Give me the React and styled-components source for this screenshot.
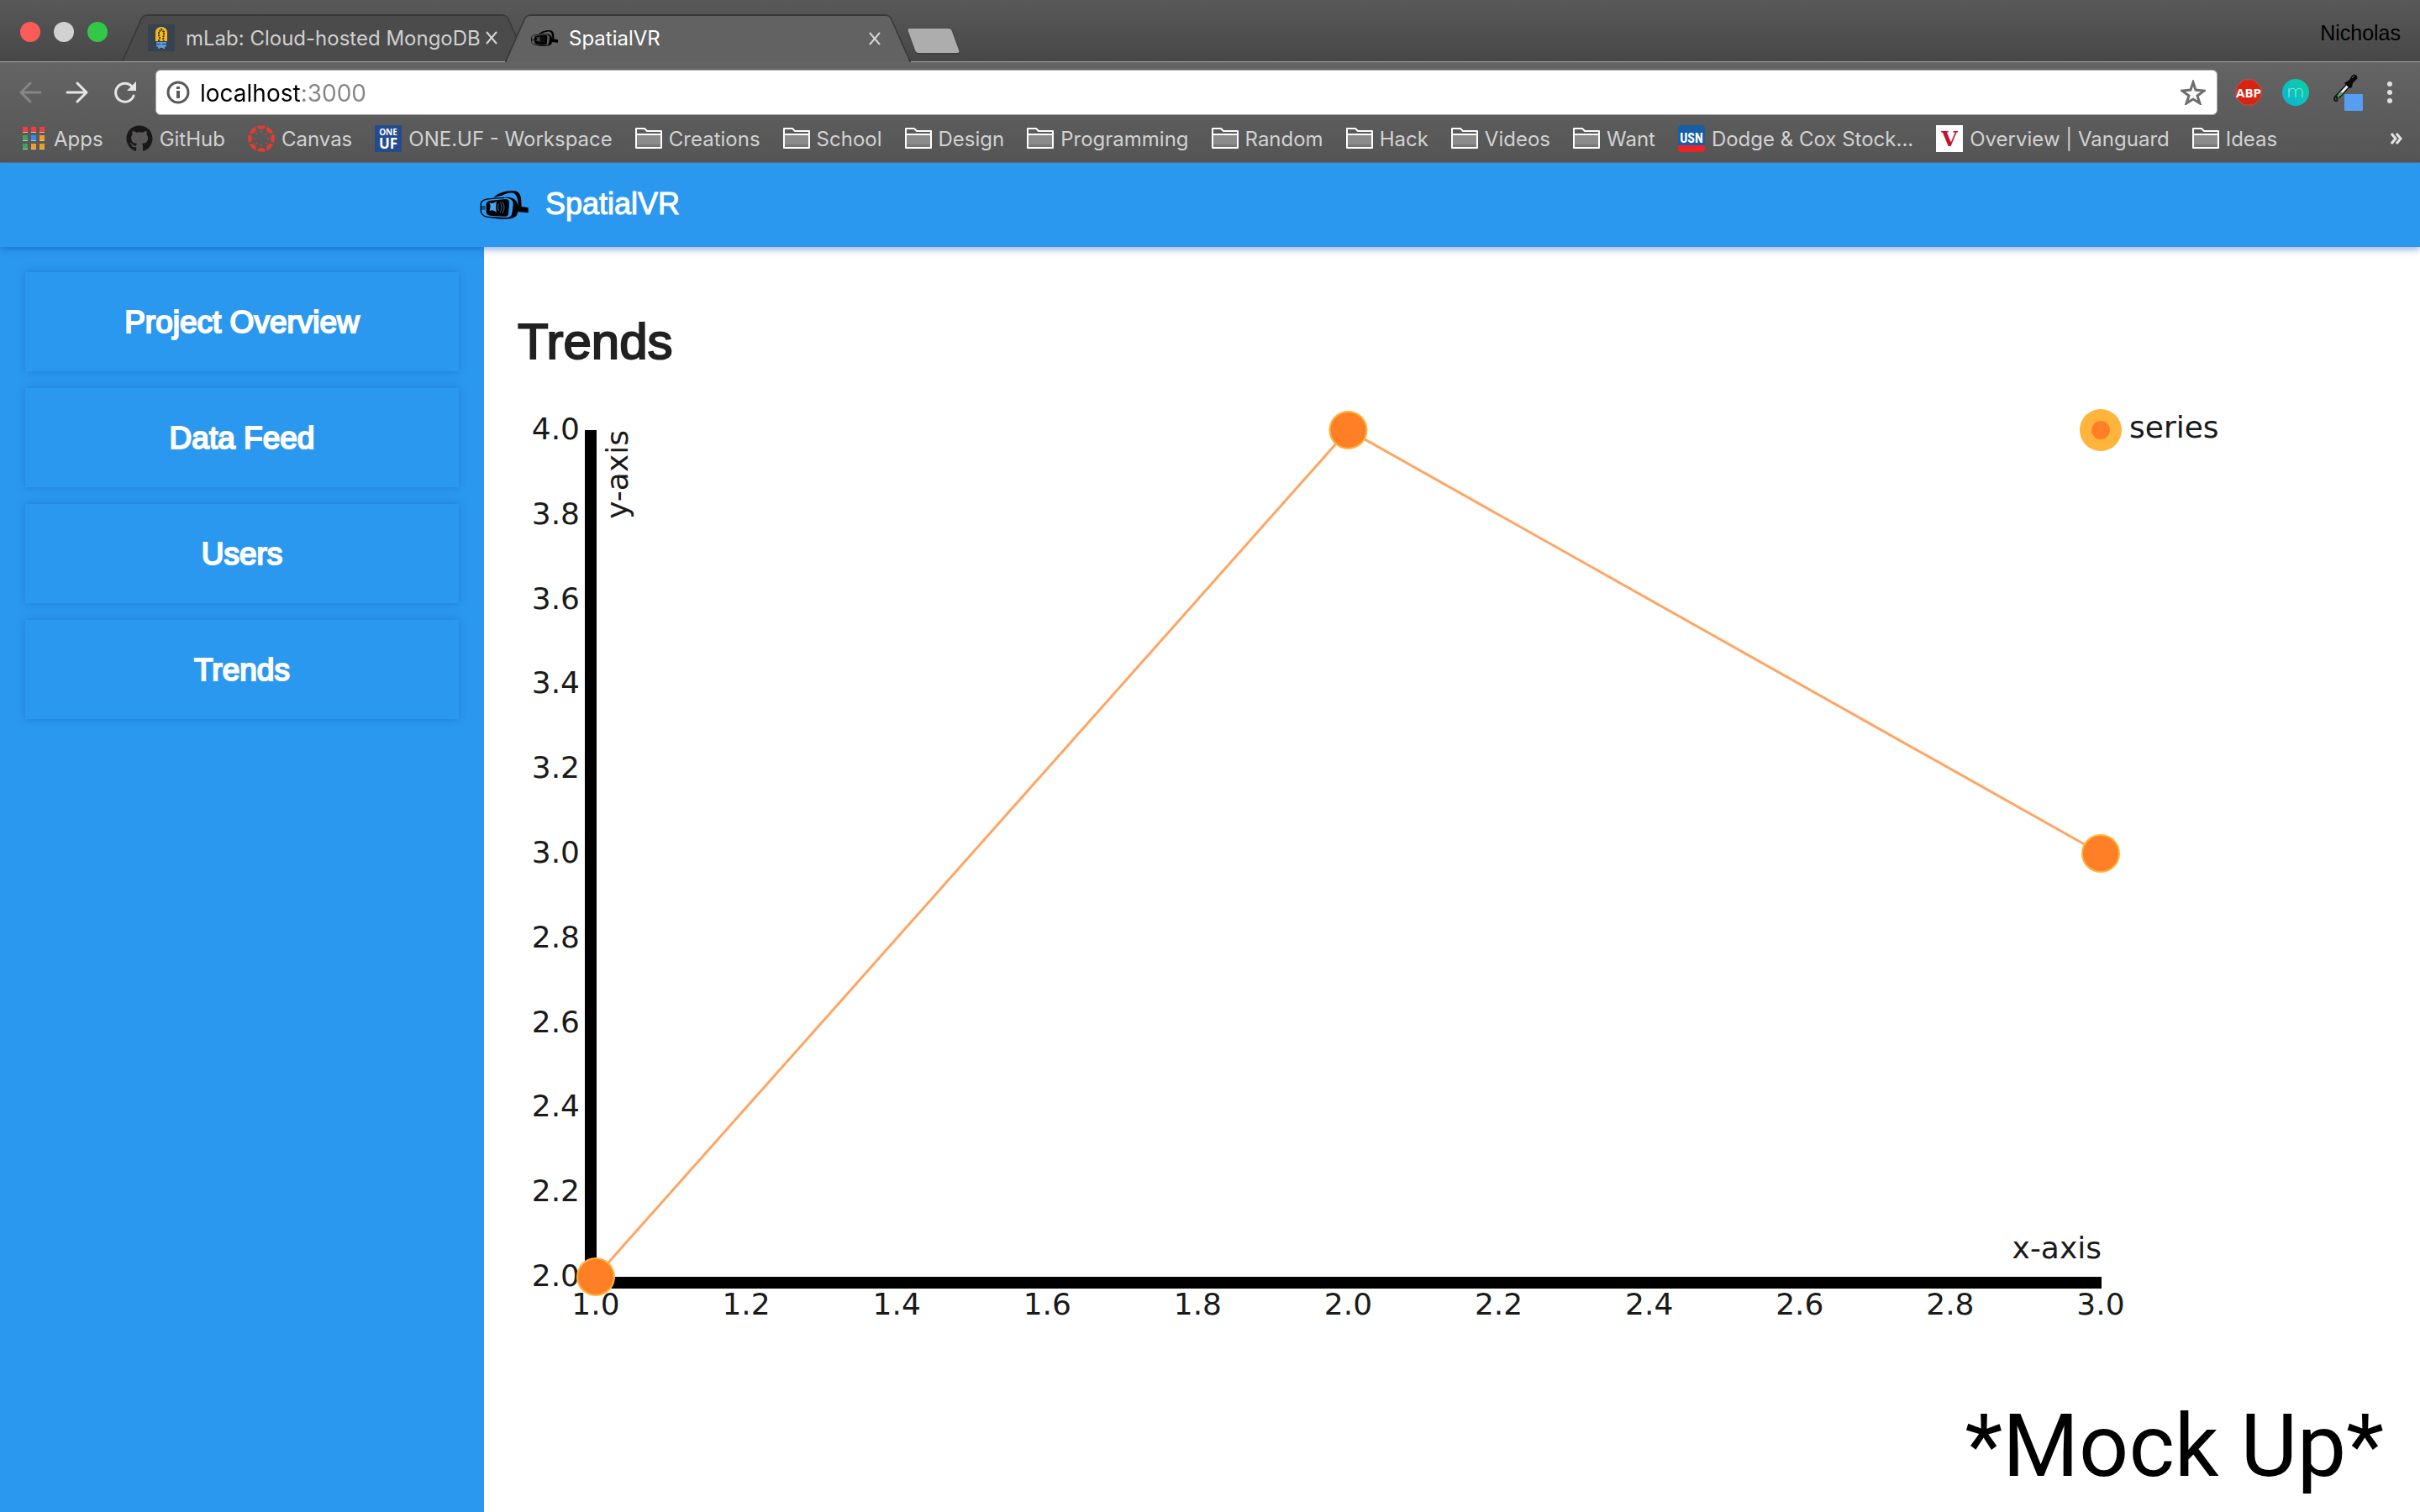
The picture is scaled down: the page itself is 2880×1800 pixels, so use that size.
import styled, { createGlobalStyle, css } from "styled-components";
import { FaGithub } from "react-icons/fa";

const GlobalStyle = createGlobalStyle`
  * {
    box-sizing: border-box;
  }
  body {
    margin: 0;
    background: #fff;
    font-family: "Liberation Sans", Arial, sans-serif;
  }
  button {
    padding: 0;
    border: 0;
    background: none;
    font: inherit;
    color: inherit;
  }
  a {
    color: inherit;
    text-decoration: none;
  }
  svg {
    display: block;
    flex: none;
  }
`;

const blue = "#2b98f0";

const Page = styled.div`
  display: flex;
  flex-direction: column;
  min-height: 100vh;
`;

/* browser window */

const Browser = styled.header`
  font-family: Inter, Roboto, sans-serif;
`;

const TabStrip = styled.div`
  display: flex;
  align-items: flex-end;
  height: 74px;
  padding: 0 23px 0 24px;
  background: linear-gradient(#595959, #474747);
  border-bottom: 1px solid #a2a2a2;
`;

const Lights = styled.div`
  display: flex;
  gap: 16px;
  align-self: center;
  margin: 2px 17px 0 0;
`;

const Light = styled.button`
  width: 24px;
  height: 24px;
  border-radius: 50%;
  background: ${(p) => p.$color};
`;

const tabSide = css`
  content: "";
  position: absolute;
  z-index: -1;
  top: 0;
  bottom: 0;
  width: 60%;
  border-top: 2px solid #383838;
  background: ${(p) => (p.$active ? "#626262" : "#4b4b4b")};
`;

const Tab = styled.div`
  position: relative;
  z-index: ${(p) => (p.$active ? 2 : 1)};
  display: flex;
  align-items: center;
  width: 483px;
  height: ${(p) => (p.$active ? 57 : 56)}px;
  margin: 0 -27px ${(p) => (p.$active ? -1 : 0)}px 0;
  padding: 0 35px 0 31px;
  font-size: 24px;
  color: ${(p) => (p.$active ? "#fff" : "#d0d0d0")};
  &::before {
    ${tabSide}
    left: 12px;
    border-left: 2px solid #383838;
    border-top-left-radius: 6px;
    transform: skewX(-24deg);
  }
  &::after {
    ${tabSide}
    right: 12px;
    border-right: 2px solid #383838;
    border-top-right-radius: 6px;
    transform: skewX(24deg);
  }
`;

const TabTitle = styled.span`
  flex: 1;
  margin-left: 13px;
  overflow: hidden;
  white-space: nowrap;
`;

const TabClose = styled.button`
  color: #d6d6d6;
`;

const NewTab = styled.button`
  width: 52px;
  height: 29px;
  margin: 0 0 10px 28px;
  border-radius: 3px;
  background: #adadad;
  box-shadow: 0 1px 2px #3a3a3a;
  transform: skewX(20deg);
`;

const Profile = styled.button`
  margin: 0 0 19px auto;
  font-family: "Liberation Sans", Arial, sans-serif;
  font-size: 25px;
  color: #000;
`;

const Bars = styled.div`
  background: linear-gradient(#646464, #555);
  border-bottom: 1px solid #6a6a6a;
`;

const Toolbar = styled.div`
  display: flex;
  align-items: center;
  padding: 9px 32px 0 22px;
`;

const NavButtons = styled.nav`
  display: flex;
  gap: 28px;
  margin-right: 23px;
`;

const AddressBar = styled.form`
  flex: 1;
  display: flex;
  align-items: center;
  height: 54px;
  padding: 0 13px 0 12px;
  background: #fff;
  border: 1px solid #a9a9a9;
  border-radius: 6px;
`;

/* host is black, port is grey */
const Address = styled.input`
  flex: 1;
  margin-left: 12px;
  padding: 1px 0 0;
  border: 0;
  outline: 0;
  font: 28px Inter, Roboto, sans-serif;
  background: linear-gradient(to right, #000 122px, #858585 122px);
  background-clip: text;
  color: transparent;
`;

const Extensions = styled.div`
  display: flex;
  align-items: center;
  gap: 24px;
  margin-left: 21px;
`;

const BookmarkBar = styled.nav`
  display: flex;
  align-items: center;
  gap: 27px;
  height: 56px;
  padding: 0 21px 0 24px;
  font-size: 24px;
  color: #d2d2d2;
  white-space: nowrap;
`;

const Bookmark = styled.a`
  display: flex;
  align-items: center;
  gap: 8px;
`;

const More = styled.button`
  margin-left: auto;
  color: #e4e4e4;
`;

/* application */

const AppHeader = styled.header`
  position: relative;
  z-index: 1;
  display: flex;
  height: 100px;
  padding-left: calc(20% - 5px);
  background: ${blue};
  box-shadow: 0 3px 8px rgba(20, 80, 180, 0.45);
`;

const Brand = styled.a`
  display: flex;
  gap: 20px;
  font-size: 36px;
  line-height: 97px;
  color: #fff;
  -webkit-text-stroke: 1px #fff;
  svg {
    align-self: center;
  }
`;

const Body = styled.div`
  flex: 1;
  display: flex;
`;

const Sidebar = styled.nav`
  display: flex;
  flex-direction: column;
  gap: 20px;
  width: 20%;
  padding: 30px;
  background: ${blue};
`;

const SideLink = styled.button`
  height: 118px;
  padding-top: 2px;
  background: ${blue};
  box-shadow: 0 0 10px rgba(0, 40, 110, 0.25);
  font-size: 37px;
  color: #fff;
  -webkit-text-stroke: 2px #fff;
`;

const Main = styled.main`
  flex: 1;
  display: flex;
  flex-direction: column;
  padding: 80px 40px 18px;
`;

const Heading = styled.h1`
  margin: 0 0 20px;
  font-size: 60px;
  font-weight: 400;
  line-height: 66px;
  color: #212121;
  -webkit-text-stroke: 2px #212121;
`;

const ChartSvg = styled.svg`
  width: 100%;
  font-family: "DejaVu Sans", sans-serif;
  font-size: 36px;
  fill: #1a1a1a;
`;

const MockUp = styled.p`
  margin: auto 3px 0 0;
  font-family: Roboto, sans-serif;
  font-size: 104px;
  line-height: 120px;
  text-align: right;
  color: #000;
`;

const Headset = ({ width, height, lens }) => (
  <svg width={width} height={height} viewBox="0 0 172 102" fill="#000" stroke="none">
    <path d="M48 25C62 9 90 0 116 0c18 0 27 10 30 26l2 30-12 2c0-24-3-43-16-49-10-4-30 1-42 8z" />
    <path
      d="M3 66V45c2-10 14-15 34-16l50-4M3 66c-2 14 6 26 24 28l56 5"
      fill="none"
      stroke="#000"
      strokeWidth="4"
    />
    <path d="M2 54h17v14H2z" opacity=".5" />
    <path d="M22 50c0-10 5-13 18-15l50-5c10 0 14 5 14 15l-3 38c-2 8-6 9-15 9l-50-3c-10-1-14-6-14-16z" />
    <path d="M84 24c22-4 42 3 48 18 6 12 5 34-2 47-8 10-29 13-51 12-18 0-34-3-44-7l54 2c20 0 24-6 26-20l3-28c1-14-8-20-34-24z" />
    <path d="M126 53l46 8v18l-42-4z" />
    <path d="M98 28c13 5 17 11 16 27s-4 29-14 37" fill="none" stroke={lens} strokeWidth="2" />
    <path d="M33 42c8 5 17 4 26-5-3 14-3 28 0 42-8-9-17-11-26-7 5-11 5-20 0-30z" fill={lens} />
    <path
      d="M66 46c-3 8-3 18 0 26M71 40c8 10 8 28 0 38M79 39c9 12 9 30 0 42"
      fill="none"
      stroke={lens}
      strokeWidth="2"
    />
  </svg>
);

const Cross = () => (
  <svg width="16" height="16" viewBox="0 0 16 16" stroke="currentColor" strokeWidth="2">
    <path d="M2 1l12 14M14 1L2 15" />
  </svg>
);

const MLab = () => (
  <svg width="32" height="32" viewBox="0 0 32 32">
    <path fill="#36424f" d="M0 0h32v32H0z" />
    <path fill="#fcb813" d="M9 20V9a7 6 0 0 1 14 0v11z" />
    <path fill="#5b9bd8" d="M10 21h12v5l-2 1v2h-2v-1h-4v1h-2v-2l-2-1z" />
    <path fill="#36424f" d="M10 23h5v1h-5zM17 23h5v1h-5z" />
    <path
      d="M13 20l1-4-1-3V9l3-3 3 3v4l-1 3 1 4"
      fill="none"
      stroke="#28313b"
      strokeWidth="2"
      strokeDasharray="2 1"
    />
  </svg>
);

const Arrow = ({ back }) => (
  <svg
    width="28"
    height="28"
    viewBox="0 0 28 28"
    fill="none"
    stroke={back ? "#868686" : "#e6e6e6"}
    strokeWidth="3"
    strokeLinecap="round"
    strokeLinejoin="round"
  >
    <path d={back ? "M26 14H3M14 3L3 14l11 11" : "M2 14h23M14 3l11 11-11 11"} />
  </svg>
);

const Reload = () => (
  <svg width="28" height="28" viewBox="0 0 28 28">
    <path
      d="M23 7A11 11 0 1 0 25 18"
      fill="none"
      stroke="#e6e6e6"
      strokeWidth="3"
      strokeLinecap="round"
    />
    <path fill="#e6e6e6" d="M28 1v11H17z" />
  </svg>
);

const Info = () => (
  <svg width="28" height="28" viewBox="0 0 28 28">
    <circle cx="14" cy="14" r="12" fill="none" stroke="#5a5a5a" strokeWidth="3" />
    <path fill="#5a5a5a" d="M12 7h4v3h-4zM12 12h4v9h-4z" />
  </svg>
);

const Star = () => (
  <svg width="30" height="30" viewBox="0 0 30 30">
    <path
      d="M15 3l3 9 10 1-8 6 3 9-8-5-8 5 3-9-8-6 10-1z"
      fill="none"
      stroke="#6e6e6e"
      strokeWidth="3"
    />
  </svg>
);

const Abp = () => (
  <svg width="32" height="32" viewBox="0 0 32 32">
    <path fill="#d92211" stroke="#b9574d" d="M10 1h12l9 9v12l-9 9H10l-9-9V10z" />
    <text x="16" y="22" fontFamily="Open Sans" fontSize="15" fontWeight="700" fill="#fff" textAnchor="middle">
      ABP
    </text>
  </svg>
);

const Momentum = () => (
  <svg width="32" height="32" viewBox="0 0 32 32">
    <defs>
      <linearGradient id="teal" x1="1" y1="0" x2="0" y2="1">
        <stop offset="0" stopColor="#0bd1a0" />
        <stop offset="1" stopColor="#0bb3d8" />
      </linearGradient>
    </defs>
    <circle cx="16" cy="16" r="16" fill="url(#teal)" />
    <path
      d="M8 22V11M8 15c1-5 8-5 8 0v7M16 15c1-5 8-5 8 0v7"
      fill="none"
      stroke="#a5ece0"
    />
  </svg>
);

const Dropper = () => (
  <svg width="44" height="44" viewBox="0 0 44 44">
    <path stroke="#111" strokeWidth="6" d="M10 27L24 12" />
    <path stroke="#e8efe9" strokeWidth="3" d="M12 25L23 13" />
    <path stroke="#4ca464" strokeWidth="3" d="M10 27l5-5" />
    <path fill="#0b0b0b" d="M21 9l3-2 3-5c3-3 8 0 6 4l-5 5-1 5-3 1-6-6z" />
    <path stroke="#777" d="M27 5l3-3" />
    <path fill="#3f8f55" stroke="#151515" strokeWidth="2" d="M8 26c2 3 2 6 0 6s-3-3 0-6z" />
    <rect x="18" y="24" width="22" height="20" rx="1" fill="#579df2" />
  </svg>
);

const Dots = () => (
  <svg width="8" height="28" viewBox="0 0 8 28" fill="#e0e0e0">
    <circle cx="4" cy="4" r="3" />
    <circle cx="4" cy="14" r="3" />
    <circle cx="4" cy="24" r="3" />
  </svg>
);

const appColors = ["#f83a3a", "#f83a3a", "#f83a3a", "#3ba35a", "#2b8ff5", "#f0a01e", "#3ba35a", "#f0a01e", "#f0a01e"];

const AppsGrid = () => (
  <svg width="32" height="32" viewBox="0 0 32 32">
    {appColors.map((color, i) => (
      <g key={i}>
        <rect x={3 + (i % 3) * 10} y={2 + Math.floor(i / 3) * 10} width="6" height="7" fill="#c4c4c4" />
        <rect x={3 + (i % 3) * 10} y={2 + Math.floor(i / 3) * 10} width="6" height="6" fill={color} />
      </g>
    ))}
  </svg>
);

const CanvasLogo = () => (
  <svg width="32" height="32" viewBox="0 0 32 32" fill="#e63b30">
    {[0, 45, 90, 135, 180, 225, 270, 315].map((angle) => (
      <g key={angle} transform={`rotate(${angle} 16 16)`}>
        <path d="M11 1a16 16 0 0 1 10 0 5 4 0 0 1-10 0z" />
        <circle cx="16" cy="8" r="1" />
      </g>
    ))}
  </svg>
);

const OneUf = () => (
  <svg width="32" height="32" viewBox="0 0 32 32" fontWeight="700" fill="#fff" textAnchor="middle">
    <path fill="#244b8c" d="M0 0h32v32H0z" />
    <text x="16" y="12" fontSize="10" fontFamily="Open Sans">ONE</text>
    <text x="16" y="28" fontSize="17" fontFamily="Open Sans">UF</text>
  </svg>
);

const Folder = () => (
  <svg width="32" height="32" viewBox="0 0 32 32">
    <path fill="#8b8b8b" d="M2 12h28v14H2z" />
    <path fill="#777" d="M2 23h28v3H2z" />
    <path
      d="M1 5V4h10l3 3h17v20H1V4M1 11h30"
      fill="none"
      stroke="#fff"
      strokeWidth="2"
      strokeLinejoin="round"
    />
  </svg>
);

const Usn = () => (
  <svg width="32" height="32" viewBox="0 0 32 32">
    <path fill="#155fa8" d="M4 0h24a4 4 0 0 1 4 4v20H0V4a4 4 0 0 1 4-4z" />
    <path fill="#ec2329" d="M0 24h32v4a4 4 0 0 1-4 4H4a4 4 0 0 1-4-4z" />
    <text x="16" y="21" fontFamily="Roboto Condensed, Roboto" fontSize="16" fontWeight="700" fill="#fff" textAnchor="middle">
      USN
    </text>
  </svg>
);

const Vanguard = () => (
  <svg width="32" height="32" viewBox="0 0 32 32">
    <path fill="#fff" d="M0 0h32v32H0z" />
    <text x="16" y="25" fontFamily="DejaVu Serif" fontSize="25" fontWeight="700" fill="#c8102e" textAnchor="middle">
      V
    </text>
  </svg>
);

const Chevrons = () => (
  <svg width="14" height="14" viewBox="0 0 14 14" fill="none" stroke="currentColor" strokeWidth="3">
    <path d="M1 1l5 6-5 6M7 1l5 6-5 6" />
  </svg>
);

const GitHub = () => <FaGithub size={32} color="#191717" />;

const bookmarks = [
  [AppsGrid, "Apps"],
  [GitHub, "GitHub"],
  [CanvasLogo, "Canvas"],
  [OneUf, "ONE.UF - Workspace"],
  [Folder, "Creations"],
  [Folder, "School"],
  [Folder, "Design"],
  [Folder, "Programming"],
  [Folder, "Random"],
  [Folder, "Hack"],
  [Folder, "Videos"],
  [Folder, "Want"],
  [Usn, "Dodge & Cox Stock..."],
  [Vanguard, "Overview | Vanguard"],
  [Folder, "Ideas"],
];

const links = ["Project Overview", "Data Feed", "Users", "Trends"];

const series = [
  [1, 2],
  [2, 4],
  [3, 3],
];
const ticks = [0, 1, 2, 3, 4, 5, 6, 7, 8, 9, 10];
const scaleX = (v) => 93 + ((v - 1) * 1791) / 2;
const scaleY = (v) => 1060 - (v - 2) * 504;

const Chart = () => (
  <ChartSvg viewBox="0 0 2224 1120" role="img" aria-label="series">
    <path d="M80 52h14v1008h1791v14H80z" fill="#000" />
    {ticks.map((t) => {
      const x = 1 + t / 5;
      const y = 2 + t / 5;
      return (
        <g key={t}>
          <text x={scaleX(x)} y="1105" textAnchor="middle">
            {x.toFixed(1)}
          </text>
          <text x="74" y={scaleY(y) + 11} textAnchor="end">
            {y.toFixed(1)}
          </text>
        </g>
      );
    })}
    <text transform="translate(131 52) rotate(-90)" textAnchor="end">
      y-axis
    </text>
    <text x="1885" y="1038" textAnchor="end">
      x-axis
    </text>
    <polyline
      points={series.map(([x, y]) => `${scaleX(x)},${scaleY(y)}`).join(" ")}
      fill="none"
      stroke="#ffa564"
      strokeWidth="3"
    />
    {series.map(([x, y]) => (
      <circle key={x} cx={scaleX(x)} cy={scaleY(y)} r="22" fill="#ff7f27" stroke="#ffb43c" strokeWidth="2" />
    ))}
    <circle cx="1884" cy="52" r="25" fill="#ffb43c" />
    <circle cx="1884" cy="52" r="11" fill="#ff7f27" />
    <text x="1918" y="61">
      series
    </text>
  </ChartSvg>
);

const App = () => {
  return (
    <Page>
      <GlobalStyle />
      <Browser>
        <TabStrip>
          <Lights>
            <Light $color="#fc5b57" aria-label="Close" />
            <Light $color="#d2d2d2" aria-label="Minimize" />
            <Light $color="#33c748" aria-label="Zoom" />
          </Lights>
          <Tab>
            <MLab />
            <TabTitle>mLab: Cloud-hosted MongoDB</TabTitle>
            <TabClose aria-label="Close tab">
              <Cross />
            </TabClose>
          </Tab>
          <Tab $active>
            <Headset width={32} height={19} lens="#444" />
            <TabTitle>SpatialVR</TabTitle>
            <TabClose aria-label="Close tab">
              <Cross />
            </TabClose>
          </Tab>
          <NewTab aria-label="New tab" />
          <Profile>Nicholas</Profile>
        </TabStrip>
        <Bars>
          <Toolbar>
            <NavButtons>
              <button aria-label="Back">
                <Arrow back />
              </button>
              <button aria-label="Forward">
                <Arrow />
              </button>
              <button aria-label="Reload">
                <Reload />
              </button>
            </NavButtons>
            <AddressBar>
              <Info />
              <Address aria-label="Address" defaultValue="localhost:3000" />
              <button type="button" aria-label="Bookmark">
                <Star />
              </button>
            </AddressBar>
            <Extensions>
              <button aria-label="Adblock">
                <Abp />
              </button>
              <button aria-label="Momentum">
                <Momentum />
              </button>
              <button aria-label="Color picker">
                <Dropper />
              </button>
              <button aria-label="Menu">
                <Dots />
              </button>
            </Extensions>
          </Toolbar>
          <BookmarkBar>
            {bookmarks.map(([Icon, name]) => (
              <Bookmark href="#" key={name}>
                <Icon />
                {name}
              </Bookmark>
            ))}
            <More aria-label="More bookmarks">
              <Chevrons />
            </More>
          </BookmarkBar>
        </Bars>
      </Browser>
      <AppHeader>
        <Brand href="#">
          <Headset width={58} height={34} lens="#4aa6f0" />
          SpatialVR
        </Brand>
      </AppHeader>
      <Body>
        <Sidebar>
          {links.map((name) => (
            <SideLink key={name}>{name}</SideLink>
          ))}
        </Sidebar>
        <Main>
          <Heading>Trends</Heading>
          <Chart />
          <MockUp>*Mock Up*</MockUp>
        </Main>
      </Body>
    </Page>
  );
};

export default App;
